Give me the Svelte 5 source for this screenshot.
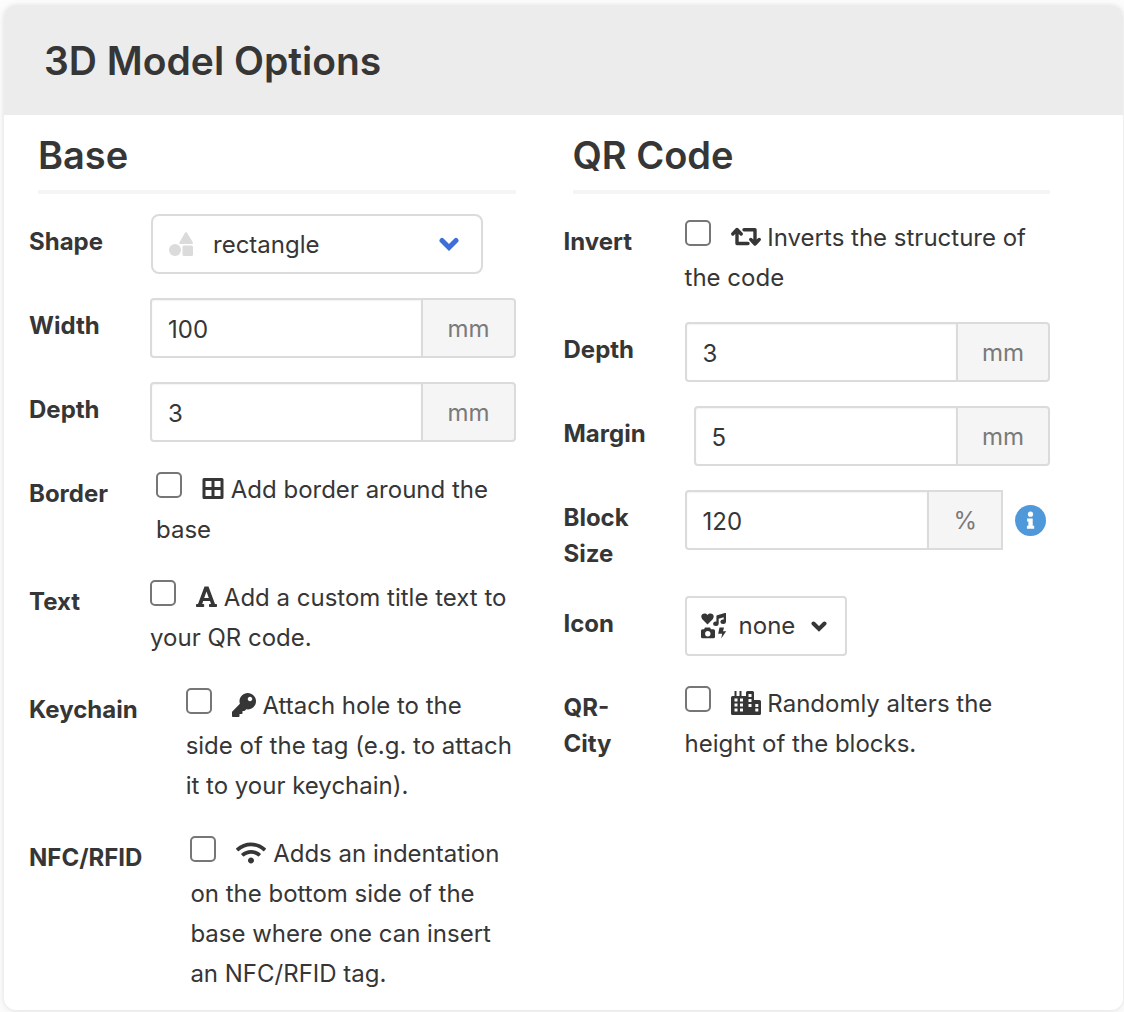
<script>
  let values = $state({ width: 100, depth: 3, qrDepth: 3, margin: 5, block: 120 });

  const baseToggles = [
    { id: 'border', label: 'Border', icon: 'border', text: 'Add border around the base' },
    { id: 'text', label: 'Text', icon: 'font', text: 'Add a custom title text to your QR code.' },
    { id: 'keychain', label: 'Keychain', icon: 'key', text: 'Attach hole to the side of the tag (e.g. to attach it to your keychain).' },
    { id: 'nfc', label: 'NFC/RFID', icon: 'wifi', text: 'Adds an indentation on the bottom side of the base where one can insert an NFC/RFID tag.' }
  ];
  const invert = { id: 'invert', label: 'Invert', icon: 'retweet', text: 'Inverts the structure of the code' };
  const city = { id: 'city', label: 'QR-City', icon: 'city', text: 'Randomly alters the height of the blocks.' };

  const icons = {
    border: { w: 22, d: 'M2 1h18a1.500 1.500 0 0 1 1.500 1.500v18a1.500 1.500 0 0 1-1.500 1.500H2a1.500 1.500 0 0 1-1.500-1.500v-18A1.500 1.500 0 0 1 2 1zm1.500 3v6h6V4zm9 0v6h6V4zm-9 9v6h6v-6zm9 0v6h6v-6z' },
    font: { w: 21, d: 'M8.500 1.500h4L19 19h1.200q.8 0 .8.800v1.400q0 .8-.8.800h-6.400q-.8 0-.8-.800v-1.400q0-.8.800-.800h1.200l-1-3H7.200l-1 3h1.200q.8 0 .8.800v1.400q0 .8-.8.800H.8q-.8 0-.8-.800v-1.400Q0 19 .8 19H2zM10.500 6.500L8.200 13h4.600z' },
    key: { w: 24, scale: 21.333, d: 'M512 176C512 273.200 433.200 352 336 352c-11.200 0-22.200-1.100-32.800-3.100l-24 27A24 24 0 0 1 261.200 384H224v40c0 13.300-10.700 24-24 24h-40v40c0 13.300-10.700 24-24 24H24c-13.300 0-24-10.700-24-24v-78c0-6.400 2.500-12.500 7-17l161.800-161.800C163.100 213.800 160 195.300 160 176 160 78.800 238.800 0 336 0c97.500 0 176 78.500 176 176zM336 128c0 26.500 21.500 48 48 48s48-21.500 48-48-21.500-48-48-48-48 21.500-48 48z' },
    wifi: { w: 30, scale: 21.333, d: 'M634.900 154.900C457.700-9 182.200-8.800 5.100 154.900c-6.700 6.200-6.800 16.600-.4 23l34.200 34c6.100 6.100 16 6.200 22.400.4 145.900-133.700 371.300-133.700 517.300 0 6.400 5.900 16.300 5.700 22.400-.4l34.200-34c6.400-6.400 6.300-16.800-.3-23zM320 352c-35.300 0-64 28.700-64 64s28.700 64 64 64 64-28.700 64-64-28.700-64-64-64zm202.700-83.600c-115.300-101.900-290.200-101.800-405.300 0-6.900 6.100-7.100 16.700-.6 23.200l34.400 34c6 5.900 15.700 6.300 22.100.8 84-72.600 209.700-72.400 293.500 0 6.400 5.500 16.100 5.200 22.100-.8l34.400-34c6.500-6.500 6.300-17.100-.6-23.200z' },
    retweet: { w: 30, line: true, d: 'M1.800 9L6 4.500 10.200 9M6 5.500V18.500H17M13 4.800H24V18M19.800 14.500L24 19l4.200-4.500' },
    city: { w: 30, d: 'M3.500 0h2v5h3V0h2v5H15V1.500A1.500 1.500 0 0 1 16.500 0h5A1.500 1.500 0 0 1 23 1.500V9h5.500a1.500 1.500 0 0 1 1.500 1.500v12a1.500 1.500 0 0 1-1.500 1.500h-27A1.500 1.500 0 0 1 0 22.500v-16A1.500 1.500 0 0 1 1.500 5h2zM3.500 7.500v3h3v-3zm5.500 0v3h3v-3zM3.500 12.500v3h3v-3zm5.500 0v3h3v-3zM3.500 17.500v3h3v-3zm5.500 0v3h3v-3zM17.500 3v3h3V3zm0 5v3h3V8zm0 5v3h3v-3zm6.800 0v3h3v-3zm0 4.500v3h3v-3z' }
  };
</script>

{#snippet glyph(name)}
  {@const icon = icons[name]}
  <svg class="glyph" class:line={icon.line} width={icon.w} height="24" viewBox={icon.scale ? `0 0 ${Math.round(icon.w * icon.scale)} 512` : `0 0 ${icon.w} 24`} aria-hidden="true">
    <path fill-rule="evenodd" d={icon.d} />
  </svg>
{/snippet}

{#snippet toggle(item)}
  <div class="field">
    <label class="label" for={item.id}>{item.label}</label>
    <div class="body">
      <label class="check"><input type="checkbox" id={item.id} />{@render glyph(item.icon)} {item.text}</label>
    </div>
  </div>
{/snippet}

{#snippet amount(key, label, unit)}
  <div class="field">
    <label class="label" for={key}>{label}</label>
    <div class="body addons">
      <input class="input" type="text" inputmode="numeric" id={key} bind:value={values[key]} />
      <span class="unit" class:square={unit === '%'}>{unit}</span>
      {#if unit === '%'}
        <button class="info" type="button" aria-label="Block size information">
          <svg viewBox="0 0 32 32" aria-hidden="true">
            <circle cx="16" cy="16" r="16" fill="#4f98d9" />
            <circle cx="16" cy="9.500" r="2.700" fill="#fff" />
            <path fill="#fff" d="M13 14h5.300v7.500h1.500v3h-7.500v-3h1.500V17H12.500v-3z" />
          </svg>
        </button>
      {/if}
    </div>
  </div>
{/snippet}

<main class="card">
  <header><h1>3D Model Options</h1></header>
  <div class="columns">
    <section>
      <h2>Base</h2>
      <div class="field">
        <label class="label" for="shape">Shape</label>
        <div class="body">
          <div class="select">
            <svg class="shapes" viewBox="0 0 24 24" aria-hidden="true">
              <circle cx="6" cy="18" r="6" />
              <path d="M16 .7q1-1.400 2 0l5.800 9.500q.7 1.800-1 1.800H11.500q-1.800 0-1-1.800z" />
              <rect x="13.500" y="13.500" width="10.500" height="10.500" rx="1.500" />
            </svg>
            <select id="shape"><option>rectangle</option><option>round</option></select>
            <svg class="arrow" viewBox="0 0 20 14" aria-hidden="true"><path d="M3 3.500l7 7 7-7" /></svg>
          </div>
        </div>
      </div>
      {@render amount('width', 'Width', 'mm')}
      {@render amount('depth', 'Depth', 'mm')}
      {#each baseToggles as item (item.id)}
        {@render toggle(item)}
      {/each}
    </section>
    <section>
      <h2>QR Code</h2>
      {@render toggle(invert)}
      {@render amount('qrDepth', 'Depth', 'mm')}
      {@render amount('margin', 'Margin', 'mm')}
      {@render amount('block', 'Block Size', '%')}
      <div class="field">
        <span class="label" id="icon-label">Icon</span>
        <div class="body">
          <button class="dropdown" type="button" aria-haspopup="listbox" aria-labelledby="icon-label icon-value">
            <svg class="glyph" width="26" height="26" viewBox="0 0 26 26" aria-hidden="true">
              <path d="M6.500 11.500L1.300 6.200C-2 2 3.500-1.500 6.500 2c3-3.500 8.500 0 5.200 4.200z" />
              <path fill-rule="evenodd" d="M25 .5v8.300a2.800 2.300 0 1 1-2.300-2.300V4.300l-5 1.500v5a2.800 2.300 0 1 1-2.300-2.300V3.200q0-.8.800-1L23.800 0q1.200-.3 1.200.5z" />
              <path fill-rule="evenodd" d="M4 14.500h5l1 1.800h2.500q1.500 0 1.500 1.500v6q0 1.500-1.500 1.500h-11Q0 25.300 0 23.800v-6q0-1.500 1.500-1.500H3zM6.800 18a2.700 2.700 0 1 0 0 5.400 2.700 2.700 0 0 0 0-5.400z" />
              <path d="M18.500 14.500h4.500l-1 3.800h3.200l-5 7.200 1-4.700h-4z" />
            </svg>
            <span id="icon-value">none</span>
            <svg class="chevron" viewBox="0 0 16 12" aria-hidden="true"><path d="M2.500 3.500L8 9l5.500-5.500" /></svg>
          </button>
        </div>
      </div>
      {@render toggle(city)}
    </section>
  </div>
</main>

<style>
  :global(body) {
    background: #fdfdfd;
    color: #363636;
    font: 24px/36px Inter, "Liberation Sans", sans-serif;
  }
  * { box-sizing: border-box; }
  .card {
    margin: 5px 1px 2px 4px;
    border-radius: 12px;
    background: #fff;
    box-shadow: 0 2px 12px rgba(10, 10, 10, .08), 0 0 0 2px rgba(10, 10, 10, .02);
    overflow: hidden;
  }
  header { padding: 33px 40px 31px; background: #ececec; }
  h1 { margin: 0; font-size: 39px; line-height: 46px; font-weight: 600; }
  .columns {
    display: grid;
    grid-template-columns: minmax(0, 1fr) minmax(0, 1fr);
    gap: 48px;
    padding: 15px 73px 16px 25px;
  }
  h2 {
    margin: 0 0 20px 9px;
    padding-bottom: 10px;
    border-bottom: 4px solid #f5f5f5;
    font-size: 38px;
    line-height: 50px;
    font-weight: 600;
  }
  .field { display: flex; margin-bottom: 24px; }
  .field:last-child { margin-bottom: 0; }
  .label { flex: 1 0 0; min-width: min-content; margin-right: 48px; padding-top: 10px; font-weight: 700; }
  .body { flex: 5 1 0; min-width: 0; }
  .addons { display: flex; align-items: flex-start; }
  .input {
    flex: 1;
    min-width: 0;
    height: 60px;
    padding: 2px 16px 0;
    border: 2px solid #dbdbdb;
    border-radius: 4px 0 0 4px;
    background: #fff;
    box-shadow: inset 0 1px 2px rgba(10, 10, 10, .05);
    color: inherit;
    font: inherit;
  }
  .unit {
    margin-left: -2px;
    padding: 11px 24px 9px;
    border: 2px solid #dbdbdb;
    border-radius: 0 4px 4px 0;
    background: #f5f5f5;
    color: #7a7a7a;
  }
  .square { border-radius: 0; }
  .info { width: 31px; height: 60px; margin: 0 4px 0 12px; padding: 0; border: 0; background: none; }
  .info svg { display: block; width: 31px; height: 31px; }
  .check { display: block; padding: 4px 0 0; line-height: 40px; }
  .check input {
    appearance: none;
    width: 26px;
    height: 26px;
    margin: 0 20px 0 0;
    border: 2px solid #767676;
    border-radius: 5px;
    background: #fff;
    vertical-align: 0;
  }
  .glyph { fill: #363636; vertical-align: -3px; }
  .line { fill: none; stroke: #363636; stroke-width: 3.4; stroke-linecap: round; stroke-linejoin: round; }
  .select { position: relative; max-width: 332px; }
  .select select {
    display: block;
    appearance: none;
    width: 100%;
    height: 60px;
    padding: 2px 60px 0;
    border: 2px solid #dbdbdb;
    border-radius: 8px;
    background: #fff;
    color: inherit;
    font: inherit;
  }
  .shapes { position: absolute; left: 18px; top: 18px; width: 24px; height: 24px; fill: #dbdbdb; }
  .arrow { position: absolute; right: 24px; top: 23px; width: 20px; height: 14px; fill: none; stroke: #3e6fd8; stroke-width: 5; stroke-linecap: round; }
  .dropdown {
    display: flex;
    align-items: center;
    gap: 12px;
    height: 60px;
    padding: 0 18px 0 14px;
    border: 2px solid #dbdbdb;
    border-radius: 4px;
    background: #fff;
    color: inherit;
    font: inherit;
  }
  .chevron { width: 16px; height: 12px; margin-left: 4px; fill: none; stroke: #363636; stroke-width: 4; stroke-linecap: round; }
</style>
